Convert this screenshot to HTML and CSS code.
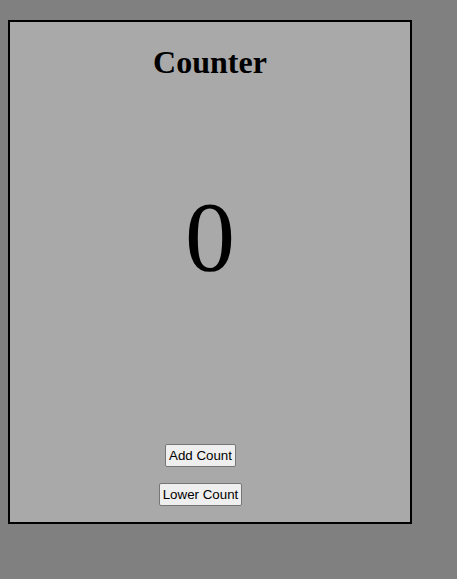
FILE: index.html
```html
<!DOCTYPE html>
<html>
<head>
<meta charset="utf-8">
<title>Counter</title>
<link rel="stylesheet" href="styles.css">
</head>
<body>
<div class="box">
  <h1 class="title">Counter</h1>
  <p class="count">0</p>
  <div class="spacer"></div>
  <div class="controls">
    <button class="btn">Add Count</button>
    <button class="btn">Lower Count</button>
  </div>
</div>
</body>
</html>
```
FILE: styles.css
```css
html, body {
  background: #808080;
}
body {
  margin: 8px;
  font-family: "Liberation Serif", "Times New Roman", serif;
}
.box {
  box-sizing: content-box;
  width: 400px;
  height: 500px;
  margin-top: 12px;
  border: 2px solid #000;
  background: #a9a9a9;
  display: flex;
  flex-direction: column;
  align-items: center;
}
.title {
  font-size: 32px;
  font-weight: bold;
  line-height: 36.8px;
  margin: 21.5px 0 0 0;
  color: #000;
}
.count {
  font-size: 100px;
  line-height: 115px;
  margin: 99px 0 0 0;
  color: #000;
}
.spacer {
  flex: 1;
}
.controls {
  display: flex;
  flex-direction: column;
  align-items: center;
  gap: 16px;
  padding-right: 19px;
  margin-bottom: 16px;
}
.btn {
  font-family: "Liberation Sans", Arial, sans-serif;
  font-size: 13.33px;
  line-height: 15px;
  padding: 3px 3px;
  border: 1px solid #767676;
  border-radius: 2px;
  background: #efefef;
  color: #000;
}
```
